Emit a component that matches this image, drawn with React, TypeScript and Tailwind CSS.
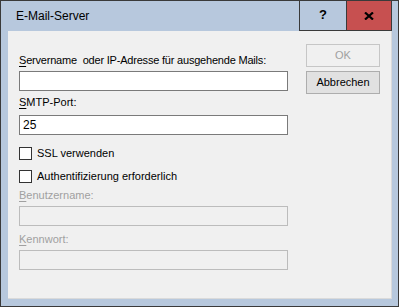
import React from "react";

const font = "font-['Liberation_Sans',Arial,sans-serif]";

function TextBox({ value, disabled }: { value?: string; disabled?: boolean }) {
  return (
    <div
      className={
        "w-[269px] h-[20px] border flex items-center pl-[3px] text-[12px] " +
        (disabled ? "border-[#bcbcbc] bg-[#f0f0f0]" : "border-[#7a7a7a] bg-white")
      }
    >
      {value}
    </div>
  );
}

function CheckRow({ label, className }: { label: string; className?: string }) {
  return (
    <div className={"flex items-center h-[13px] " + (className ?? "")}>
      <div className="w-[13px] h-[13px] border border-[#333333] bg-white shrink-0" />
      <span className="ml-[5px] text-[11px] leading-[13px]">{label}</span>
    </div>
  );
}

export default function App() {
  return (
    <div className={"w-[399px] h-[307px] border border-[#3a3a3a] bg-[#b7c8dd] flex flex-col text-black " + font}>
      {/* Title bar */}
      <div className="h-[30px] flex shrink-0">
        <span className="pl-[15px] pt-[7px] text-[12px] leading-[16px]">E-Mail-Server</span>
        <div className="ml-auto mr-[6px] flex border-x border-b border-[#3a3a3a]">
          <div className="w-[46px] flex items-center justify-center font-bold text-[13px] pb-[1px]">?</div>
          <div className="w-[45px] border-l border-[#3a3a3a] bg-[#c75050] flex items-center justify-center">
            <svg width="10" height="8" viewBox="0 0 10 8">
              <path d="M1 0.5 L9 7.5 M9 0.5 L1 7.5" stroke="#000" strokeWidth="2.2" />
            </svg>
          </div>
        </div>
      </div>

      {/* Client area */}
      <div className="ml-[7px] mr-[6px] h-[268px] shrink-0 bg-[#f0f0f0] border-r border-b border-[#dadada] flex text-[11px]">
        <div className="pl-[11px] pt-[22px] flex flex-col">
          <div className="h-[14px] leading-[14px] tracking-[-0.2px]">
            <span className="underline underline-offset-2">S</span>ervername&nbsp; oder IP-Adresse für ausgehende Mails:
          </div>
          <div className="mt-[4px]"><TextBox /></div>
          <div className="mt-[4px] h-[14px] leading-[14px]">
            <span className="underline underline-offset-2">S</span>MTP-Port:
          </div>
          <div className="mt-[6px]"><TextBox value="25" /></div>
          <CheckRow label="SSL verwenden" className="mt-[12px]" />
          <CheckRow label="Authentifizierung erforderlich" className="mt-[10px]" />
          <div className="mt-[5px] h-[14px] leading-[14px] text-[#a0a0a0]">
            <span className="underline underline-offset-2">B</span>enutzername:
          </div>
          <div className="mt-[4px]"><TextBox disabled /></div>
          <div className="mt-[6px] h-[14px] leading-[14px] text-[#a0a0a0]">
            <span className="underline underline-offset-2">K</span>ennwort:
          </div>
          <div className="mt-[4px]"><TextBox disabled /></div>
        </div>

        <div className="ml-auto mr-[11px] pt-[13px] flex flex-col">
          <div className="w-[74px] h-[23px] border border-[#c6c6c6] bg-[#f0f0f0] text-[#a0a0a0] text-[11px] flex items-center justify-center">
            OK
          </div>
          <div className="mt-[4px] w-[74px] h-[23px] border border-[#adadad] bg-[#e1e1e1] text-[11px] flex items-center justify-center">
            Abbrechen
          </div>
        </div>
      </div>
    </div>
  );
}
